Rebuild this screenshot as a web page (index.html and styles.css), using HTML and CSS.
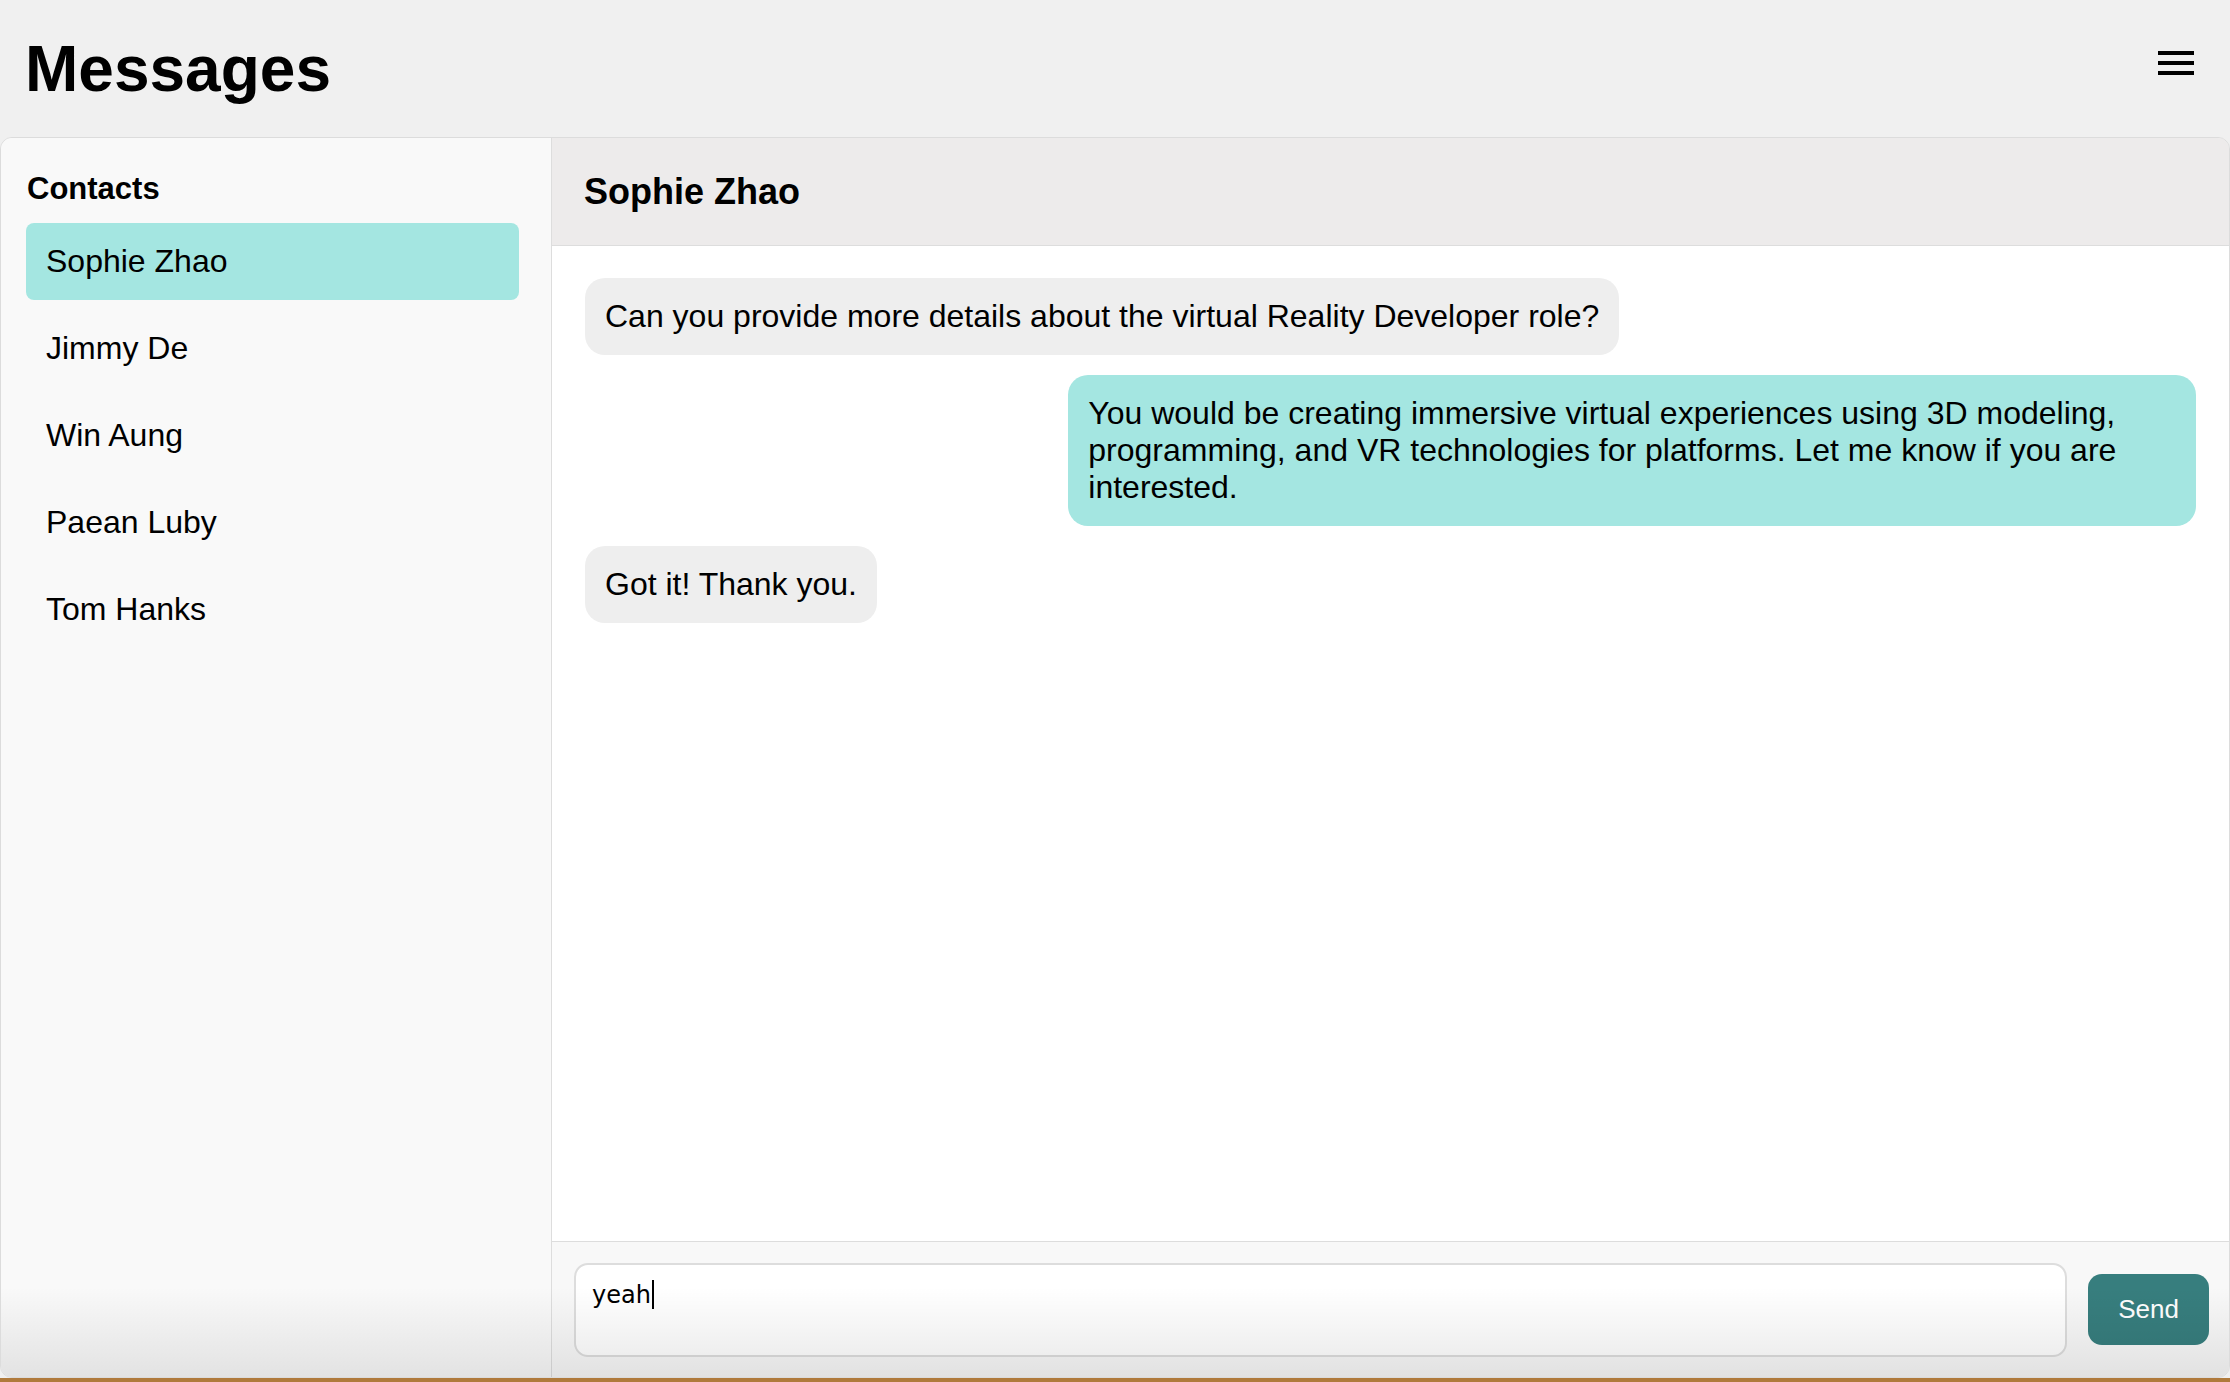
FILE: index.html
```html
<!DOCTYPE html>
<html lang="en">
<head>
<meta charset="utf-8">
<title>Messages</title>
<link rel="stylesheet" href="styles.css">
</head>
<body>
<div class="app">
  <header class="topbar">
    <h1 class="title">Messages</h1>
    <button class="menu-btn" aria-label="Menu">
      <svg width="36" height="24" viewBox="0 0 36 24"><rect x="0" y="0" width="36" height="4" fill="#000"/><rect x="0" y="10" width="36" height="4" fill="#000"/><rect x="0" y="20" width="36" height="4" fill="#000"/></svg>
    </button>
  </header>
  <main class="panel">
    <aside class="sidebar">
      <h2 class="sidebar-title">Contacts</h2>
      <ul class="contacts">
        <li class="contact active">Sophie Zhao</li>
        <li class="contact">Jimmy De</li>
        <li class="contact">Win Aung</li>
        <li class="contact">Paean Luby</li>
        <li class="contact">Tom Hanks</li>
      </ul>
    </aside>
    <section class="chat">
      <div class="chat-header">Sophie Zhao</div>
      <div class="messages">
        <div class="bubble received">Can you provide more details about the virtual Reality Developer role?</div>
        <div class="bubble sent">You would be creating immersive virtual experiences using 3D modeling, programming, and VR technologies for platforms. Let me know if you are interested.</div>
        <div class="bubble received">Got it! Thank you.</div>
      </div>
      <div class="composer">
        <div class="input">yeah<span class="caret"></span></div>
        <button class="send">Send</button>
      </div>
    </section>
    <div class="shade"></div>
  </main>
</div>
</body>
</html>
```
FILE: styles.css
```css
html, body {
  margin: 0;
  padding: 0;
}
body {
  background: #b07a3c;
  font-family: "Liberation Sans", Arial, sans-serif;
  color: #000;
  height: 1382px;
  overflow: hidden;
}
.app {
  height: 1378px;
  display: flex;
  flex-direction: column;
  background: #f0f0f0;
}
.topbar {
  height: 137px;
  flex: none;
  display: flex;
  align-items: center;
  justify-content: space-between;
  padding: 0 36px 0 25px;
  box-sizing: border-box;
}
.title {
  margin: 0;
  font-size: 64px;
  font-weight: bold;
  line-height: normal;
}
.menu-btn {
  border: 0;
  background: transparent;
  padding: 0;
  margin: 0 0 11px 0;
  display: flex;
}
.panel {
  position: relative;
  flex: 1;
  display: flex;
  border: 1px solid #dcdcdc;
  border-radius: 12px;
  overflow: hidden;
  min-height: 0;
}
.sidebar {
  width: 551px;
  flex: none;
  box-sizing: border-box;
  background: #f9f9f9;
  border-right: 1px solid #dddddd;
  padding: 26px 32px 26px 25px;
}
.sidebar-title {
  margin: 7px 0 16px 1px;
  font-size: 31px;
  font-weight: bold;
  line-height: normal;
}
.contacts {
  list-style: none;
  margin: 0;
  padding: 0;
}
.contact {
  font-size: 32px;
  line-height: normal;
  padding: 20px 20px;
  border-radius: 8px;
  margin-bottom: 10px;
}
.contact.active {
  background: #a4e6e1;
}
.chat {
  flex: 1;
  display: flex;
  flex-direction: column;
  min-width: 0;
}
.chat-header {
  height: 107px;
  flex: none;
  display: flex;
  align-items: center;
  padding: 0 32px;
  background: #edebeb;
  border-bottom: 1px solid #dddddd;
  font-size: 36px;
  font-weight: bold;
}
.messages {
  flex: 1;
  background: #ffffff;
  padding: 32px 33px;
  display: flex;
  flex-direction: column;
  gap: 20px;
}
.bubble {
  max-width: 70%;
  box-sizing: border-box;
  padding: 20px;
  border-radius: 20px;
  font-size: 32px;
  line-height: normal;
}
.bubble.received {
  align-self: flex-start;
  background: #eeeeee;
}
.bubble.sent {
  align-self: flex-end;
  background: #a4e6e1;
}
.composer {
  flex: none;
  height: 136px;
  box-sizing: border-box;
  border-top: 1px solid #dddddd;
  background: #f8f8f8;
  display: flex;
  align-items: center;
  gap: 21px;
  padding: 0 20px 0 22px;
}
.input {
  flex: 1;
  height: 94px;
  box-sizing: border-box;
  background: #ffffff;
  border: 2px solid #dddddd;
  border-radius: 14px;
  padding: 15px 16px;
  font-family: "DejaVu Sans", Verdana, sans-serif;
  font-size: 24px;
  line-height: normal;
}
.caret {
  display: inline-block;
  width: 2px;
  height: 29px;
  background: #000;
  vertical-align: -6px;
  margin-left: 1px;
}
.send {
  flex: none;
  border: 0;
  background: #377e7e;
  color: #ffffff;
  border-radius: 14px;
  padding: 20px 30px;
  font-family: "Liberation Sans", Arial, sans-serif;
  font-size: 26px;
  line-height: normal;
}
.shade {
  position: absolute;
  left: 0;
  right: 0;
  bottom: 0;
  height: 90px;
  background: linear-gradient(to bottom, rgba(0,0,0,0), rgba(0,0,0,0.09));
  pointer-events: none;
}
```
